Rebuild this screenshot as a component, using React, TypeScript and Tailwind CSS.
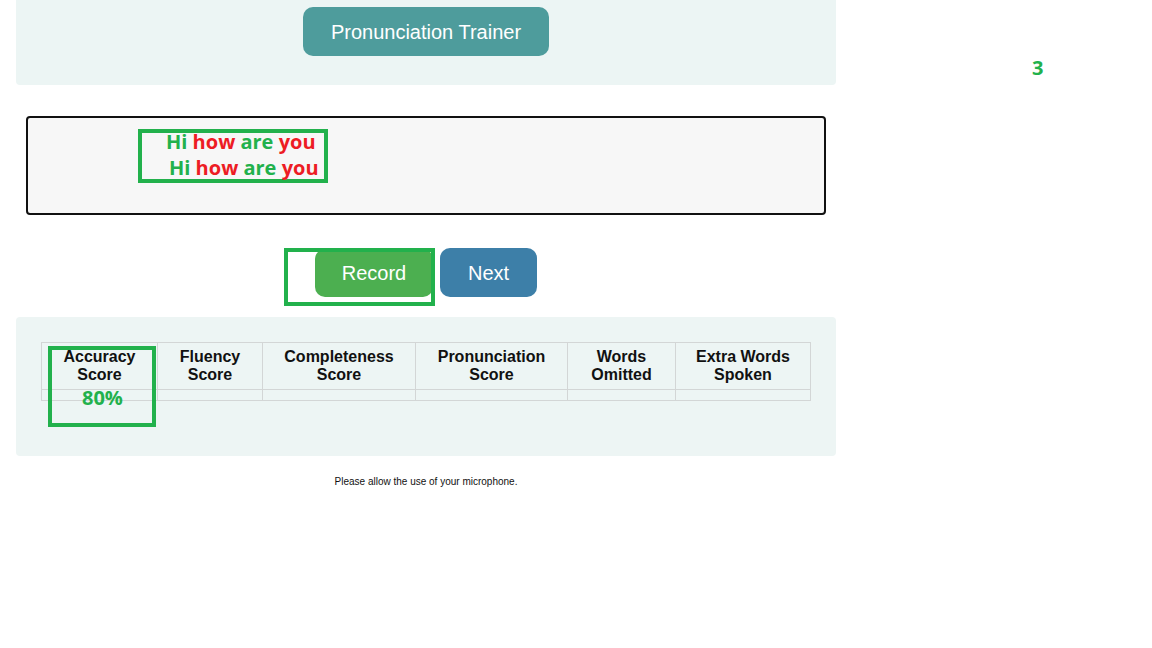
import React from "react";

const G = "text-[#22b14c]";
const R = "text-[#ed1c24]";

export default function App() {
  const heads = [
    ["Accuracy", "Score"],
    ["Fluency", "Score"],
    ["Completeness", "Score"],
    ["Pronunciation", "Score"],
    ["Words", "Omitted"],
    ["Extra Words", "Spoken"],
  ];
  const widths = ["w-[116px]", "w-[105px]", "w-[153px]", "w-[152px]", "w-[108px]", "w-[135px]"];
  return (
    <div className="relative w-[1152px] h-[648px] bg-white overflow-hidden font-['Liberation_Sans',Arial,sans-serif]">
      <div className="ml-[16px] w-[820px] flex flex-col">
        <div className="h-[85px] bg-[#ecf5f4] rounded-b-[4px] flex justify-center pt-[7px]">
          <div className="h-[49px] w-[246px] bg-[#4e9c9c] rounded-[10px] flex items-center justify-center text-white text-[20px]">
            Pronunciation Trainer
          </div>
        </div>
        <div className="mt-[31px] mx-[10px] h-[99px] border-2 border-[#111] rounded-[4px] bg-[#f7f7f7]"></div>
        <div className="mt-[33px] flex justify-center gap-[7px]">
          <div className="h-[48px] mt-[1px] w-[118px] bg-[#4caf50] rounded-[10px] flex items-center justify-center text-white text-[20px]">
            Record
          </div>
          <div className="h-[49px] w-[97px] bg-[#3d7fa8] rounded-[10px] flex items-center justify-center text-white text-[20px]">
            Next
          </div>
        </div>
        <div className="mt-[20px] h-[139px] bg-[#edf5f4] rounded-[4px] pt-[25px] pl-[25px]">
          <table className="table-fixed border-collapse w-[769px]">
            <thead>
              <tr>
                {heads.map((h, i) => (
                  <th
                    key={i}
                    className={`${widths[i]} border border-[#d3d6d6] text-[16px] leading-[18px] font-bold text-[#111] pt-[5px] pb-[5px] px-1 text-center`}
                  >
                    {h[0]}
                    <br />
                    {h[1]}
                  </th>
                ))}
              </tr>
            </thead>
            <tbody>
              <tr>
                {heads.map((_, i) => (
                  <td key={i} className="border border-[#d3d6d6] h-[11px] p-0"></td>
                ))}
              </tr>
            </tbody>
          </table>
        </div>
        <div className="mt-[20px] text-center text-[10px] text-[#111] leading-[12px]">
          Please allow the use of your microphone.
        </div>
      </div>

      {/* annotations */}
      <div className="absolute left-[138px] top-[129px] w-[190px] h-[54px] border-[4px] border-[#22b14c]"></div>
      <div className="absolute left-[166px] top-[129px] font-['Open_Sans',sans-serif] font-bold text-[20px] leading-[26px] whitespace-nowrap">
        <div>
          <span className={G}>Hi </span>
          <span className={R}>how </span>
          <span className={G}>are </span>
          <span className={R}>you</span>
        </div>
        <div className="pl-[3px]">
          <span className={G}>Hi </span>
          <span className={R}>how </span>
          <span className={G}>are </span>
          <span className={R}>you</span>
        </div>
      </div>
      <div className="absolute left-[284px] top-[248px] w-[151px] h-[58px] border-[4px] border-[#22b14c]"></div>
      <div className="absolute left-[48px] top-[346px] w-[108px] h-[81px] border-[4px] border-[#22b14c]"></div>
      <div className={`absolute left-[82px] top-[385px] font-['Open_Sans',sans-serif] font-bold text-[20px] leading-[26px] ${G}`}>80%</div>
      <div className={`absolute left-[1032px] top-[55px] font-['Open_Sans',sans-serif] font-bold text-[20px] leading-[26px] ${G}`}>3</div>
    </div>
  );
}
